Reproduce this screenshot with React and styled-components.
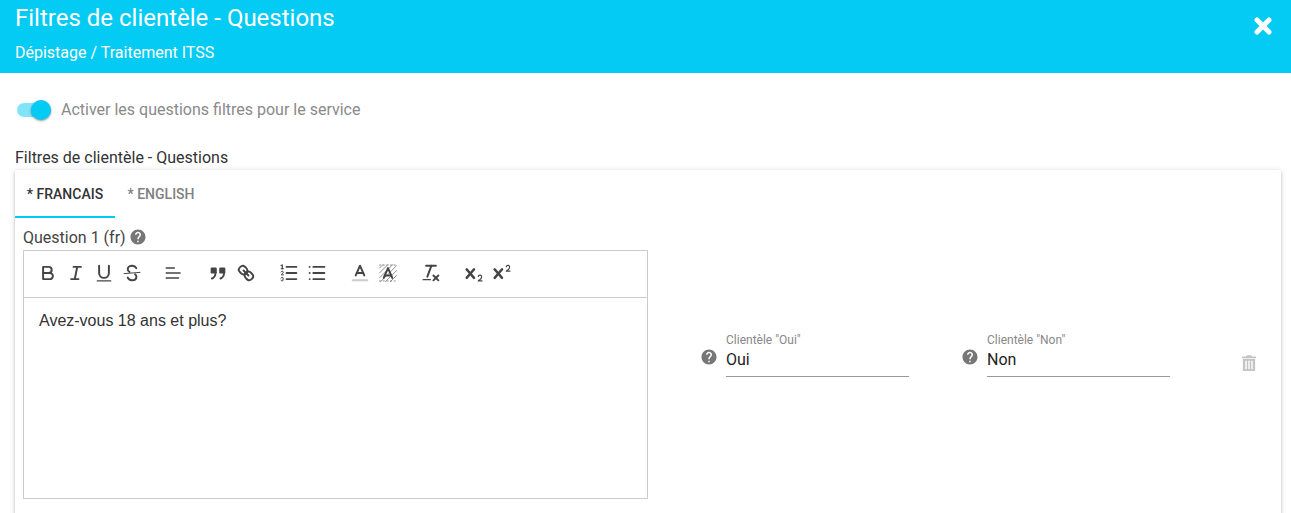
import React from 'react';
import styled, { createGlobalStyle } from 'styled-components';
import { MdHelp } from 'react-icons/md';

const CYAN = '#04cbf4';

const GlobalStyle = createGlobalStyle`
    html, body {
        margin: 0;
        height: 513px;
        overflow: hidden;
        background: #fff;
        font-family: Roboto, "Liberation Sans", sans-serif;
    }
`;

const Header = styled.header`
    height: 73px;
    box-sizing: border-box;
    padding: 3px 19px 0 15px;
    background: ${CYAN};
    color: #fff;
    display: flex;
    justify-content: space-between;
`;

const Title = styled.h1`
    margin: 0;
    font-size: 24px;
    font-weight: 400;
    line-height: 30px;
`;

const Subtitle = styled.div`
    margin-top: 10px;
    font-size: 16px;
    line-height: 19px;
`;

const CloseIcon = styled.svg`
    width: 18px;
    height: 18px;
    margin-top: 14px;
`;

const Main = styled.main`
    padding: 0 10px 0 15px;
`;

const ToggleRow = styled.div`
    display: flex;
    align-items: center;
    height: 74px;
    padding-left: 2px;
    gap: 10px;
`;

const Track = styled.span`
    position: relative;
    display: block;
    width: 34px;
    height: 14px;
    border-radius: 7px;
    background: #81e5fa;
`;

const Thumb = styled.span`
    position: absolute;
    top: -3px;
    right: 0;
    width: 20px;
    height: 20px;
    border-radius: 50%;
    background: ${CYAN};
    box-shadow: 0 1px 3px rgba(0, 0, 0, 0.3), 0 1px 1px rgba(0, 0, 0, 0.14);
`;

const ToggleLabel = styled.span`
    font-size: 16px;
    color: #8a8a8a;
    margin-top: -2px;
`;

const SectionLabel = styled.div`
    font-size: 16px;
    line-height: 19px;
    margin-top: 1px;
    color: #333;
`;

const Card = styled.section`
    margin-top: 3px;
    height: 400px;
    background: #fff;
    box-shadow: 0 1px 5px rgba(0, 0, 0, 0.2), 0 2px 2px rgba(0, 0, 0, 0.12);
`;

const Tabs = styled.div`
    display: flex;
    height: 48px;
`;

const Tab = styled.div`
    box-sizing: border-box;
    width: ${(p) => p.$width}px;
    padding-top: 16px;
    text-align: center;
    font-size: 14px;
    line-height: 16px;
    font-weight: 500;
    color: ${(p) => (p.$active ? '#333' : '#808080')};
    border-bottom: 2px solid ${(p) => (p.$active ? CYAN : 'transparent')};
`;

const Body = styled.div`
    display: flex;
    padding: 10px 0 0 8px;
`;

const EditorColumn = styled.div`
    width: 625px;
`;

const QuestionLabel = styled.div`
    display: flex;
    align-items: center;
    gap: 3px;
    height: 18px;
    margin-bottom: 4px;
    font-size: 16px;
    color: #444;
`;

const HelpIcon = styled(MdHelp)`
    width: 18px;
    height: 18px;
    color: #777;
    flex: none;
`;

const Editor = styled.div`
    border: 1px solid #ccc;
    box-sizing: border-box;
    height: 249px;
`;

const Toolbar = styled.div`
    display: flex;
    box-sizing: border-box;
    height: 47px;
    padding: 10px 10px;
    border-bottom: 1px solid #ccc;
`;

const Group = styled.div`
    display: flex;
    margin-right: 15px;
`;

const ToolButton = styled.span`
    width: 28px;
    height: 24px;
    padding: 1px 3px;
    box-sizing: border-box;
    flex: none;
`;

const Ico = styled.svg`
    display: block;
    width: 22px;
    height: 22px;
    fill: none;
    stroke: #444;
    stroke-width: 1.6;
    stroke-linecap: round;
    stroke-linejoin: round;

    .fill {
        fill: #444;
        stroke: none;
    }
    .thin {
        stroke-width: 0.8;
    }
    .medium {
        stroke-width: 1.1;
    }
    .label {
        stroke: #ccc;
    }
`;

const EditorText = styled.div`
    padding: 13px 15px;
    font-family: "Liberation Sans", Arial, sans-serif;
    font-size: 16px;
    line-height: 20px;
    color: #333;
`;

const Fields = styled.div`
    display: flex;
    align-items: flex-start;
    margin-left: 52px;
    padding-top: 106px;
`;

const FieldGroup = styled.div`
    display: flex;
    align-items: flex-start;
    width: 261px;
`;

const FieldHelp = styled(HelpIcon)`
    margin-top: 14px;
    margin-right: 8px;
`;

const Field = styled.div`
    width: 183px;
    height: 43px;
    box-sizing: border-box;
    border-bottom: 1px solid #999;
`;

const FieldLabel = styled.div`
    font-size: 12px;
    line-height: 13px;
    color: #888;
`;

const FieldValue = styled.div`
    margin-top: 3px;
    font-size: 16px;
    line-height: 19px;
    color: #222;
`;

const TrashIcon = styled.svg`
    width: 14px;
    height: 16px;
    margin: 21px 0 0 20px;
    fill: #c4c4c4;
`;

const icon = (children) => <Ico viewBox="0 0 18 18">{children}</Ico>;

const ICONS = {
    bold: (
        <>
            <path d="M5,4H9.5A2.5,2.5,0,0,1,12,6.5v0A2.5,2.5,0,0,1,9.5,9H5V4Z" />
            <path d="M5,9h5.5A2.5,2.5,0,0,1,13,11.5v0A2.5,2.5,0,0,1,10.5,14H5V9Z" />
        </>
    ),
    italic: (
        <>
            <line x1="7" x2="13" y1="4" y2="4" />
            <line x1="5" x2="11" y1="14" y2="14" />
            <line x1="8" x2="10" y1="14" y2="4" />
        </>
    ),
    underline: (
        <>
            <path d="M5,3V9a4,4,0,0,0,4,4H9a4,4,0,0,0,4-4V3" />
            <rect className="fill" x="3" y="15" width="12" height="1" rx=".5" />
        </>
    ),
    strike: (
        <>
            <line className="thin" x1="15.5" x2="2.5" y1="8.5" y2="9.5" />
            <path d="M12.5,5C11.8,3.7 10.5,3 9,3 C7,3 5.5,4.2 5.5,5.8 C5.5,6.9 6,7.6 7,8.2" />
            <path d="M5.5,12.8C6.2,14.2 7.5,15 9,15 C11,15 12.6,13.9 12.6,12.1 C12.6,11.2 12.2,10.5 11.5,10" />
        </>
    ),
    align: (
        <>
            <line className="medium" x1="1.8" x2="13.2" y1="9" y2="9" />
            <line className="medium" x1="1.8" x2="12" y1="13.1" y2="13.1" />
            <line className="medium" x1="1.8" x2="8.5" y1="4.9" y2="4.9" />
        </>
    ),
    quote: (
        <>
            <rect className="fill" x="3" y="4.5" width="5" height="5" rx="1" />
            <rect className="fill" x="10" y="4.5" width="5" height="5" rx="1" />
            <path d="M7,8.5c0,4.031-3,5-3,5" />
            <path d="M14,8.5c0,4.031-3,5-3,5" />
        </>
    ),
    link: (
        <>
            <line x1="7" x2="11" y1="7" y2="11" />
            <path d="M8.9,4.577a3.476,3.476,0,0,1,.36,4.679A3.476,3.476,0,0,1,4.577,8.9C3.185,7.5,2.035,6.4,4.217,4.217S7.5,3.185,8.9,4.577Z" />
            <path d="M13.423,9.1a3.476,3.476,0,0,0-4.679-.36,3.476,3.476,0,0,0,.36,4.679c1.392,1.392,2.5,2.542,4.679.36S14.815,10.5,13.423,9.1Z" />
        </>
    ),
    ordered: (
        <>
            <line x1="7" x2="15" y1="4" y2="4" />
            <line x1="7" x2="15" y1="9" y2="9" />
            <line x1="7" x2="15" y1="14" y2="14" />
            <line className="thin" x1="2.5" x2="4.5" y1="5.5" y2="5.5" />
            <path className="fill" d="M3.5,6A0.5,0.5,0,0,1,3,5.5V3.085l-0.276.138A0.5,0.5,0,0,1,2.053,3c-0.124-.247-0.023-0.324.224-0.447l1-.5A0.5,0.5,0,0,1,4,2.5v3A0.5,0.5,0,0,1,3.5,6Z" />
            <path className="thin" d="M4.5,10.5h-2c0-.234,1.85-1.076,1.85-2.234A0.959,0.959,0,0,0,2.5,8.156" />
            <path className="thin" d="M2.5,14.846a0.959,0.959,0,0,0,1.85-.109A0.7,0.7,0,0,0,3.75,14a0.688,0.688,0,0,0,.6-0.736,0.959,0.959,0,0,0-1.85-.109" />
        </>
    ),
    bullet: (
        <>
            <line x1="6" x2="15" y1="4" y2="4" />
            <line x1="6" x2="15" y1="9" y2="9" />
            <line x1="6" x2="15" y1="14" y2="14" />
            <line x1="3" x2="3" y1="4" y2="4" />
            <line x1="3" x2="3" y1="9" y2="9" />
            <line x1="3" x2="3" y1="14" y2="14" />
        </>
    ),
    color: (
        <>
            <line className="label" x1="3" x2="15" y1="15" y2="15" />
            <polyline points="5.5 11 9 3 12.5 11" />
            <line x1="11.63" x2="6.38" y1="9" y2="9" />
        </>
    ),
    background: (
        <>
            <g className="thin" opacity="0.6">
                <line x1="2" x2="5" y1="5" y2="2" />
                <line x1="2" x2="9" y1="9" y2="2" />
                <line x1="2" x2="13" y1="13" y2="2" />
                <line x1="3" x2="16" y1="16" y2="3" />
                <line x1="7" x2="16" y1="16" y2="7" />
                <line x1="11" x2="16" y1="16" y2="11" />
                <line x1="2" x2="16" y1="2.5" y2="2.5" strokeDasharray="1 2" />
                <line x1="2" x2="16" y1="15.5" y2="15.5" strokeDasharray="1 2" />
            </g>
            <polyline points="5.5 13 9 5 12.5 13" />
            <line x1="11.63" x2="6.38" y1="11" y2="11" />
        </>
    ),
    clean: (
        <>
            <line x1="5" x2="13" y1="3" y2="3" />
            <line x1="6" x2="9.35" y1="12" y2="3" />
            <line x1="11" x2="15" y1="11" y2="15" />
            <line x1="15" x2="11" y1="11" y2="15" />
            <rect className="fill" x="2" y="14" width="7" height="1" rx=".5" />
        </>
    ),
    sub: (
        <>
            <path className="fill" d="M15.5,15H13.861a3.858,3.858,0,0,0,1.914-2.975,1.8,1.8,0,0,0-1.6-1.751A1.921,1.921,0,0,0,12.021,11.7a0.50013,0.50013,0,1,0,.957.291h0a0.914,0.914,0,0,1,1.053-.725,0.81,0.81,0,0,1,.744.762c0,1.076-1.16971,1.86982-1.93971,2.43082A1.45639,1.45639,0,0,0,12,15.5a0.5,0.5,0,0,0,.5.5h3A0.5,0.5,0,0,0,15.5,15Z" />
            <path className="fill" d="M9.65,5.241a1,1,0,0,0-1.409.108L6,7.964,3.759,5.349A1,1,0,0,0,2.241,6.649L4.684,9.5,2.241,12.35A1,1,0,0,0,3.759,13.65L6,11.036,8.241,13.65a1,1,0,1,0,1.518-1.3L7.316,9.5,9.759,6.651A1,1,0,0,0,9.65,5.241Z" />
        </>
    ),
    sup: (
        <>
            <path className="fill" d="M15.5,7H13.861a4.015,4.015,0,0,0,1.914-2.975,1.8,1.8,0,0,0-1.6-1.751A1.922,1.922,0,0,0,12.021,3.7a0.5,0.5,0,1,0,.957.291,0.917,0.917,0,0,1,1.053-.725,0.81,0.81,0,0,1,.744.762c0,1.077-1.164,1.925-1.934,2.486A1.423,1.423,0,0,0,12,7.5a0.5,0.5,0,0,0,.5.5h3A0.5,0.5,0,0,0,15.5,7Z" />
            <path className="fill" d="M9.651,5.241a1,1,0,0,0-1.41.108L6,7.964,3.759,5.349a1,1,0,1,0-1.519,1.3L4.683,9.5,2.241,12.35a1,1,0,1,0,1.519,1.3L6,11.036l2.241,2.616a1,1,0,0,0,1.519-1.3L7.317,9.5,9.759,6.651A1,1,0,0,0,9.651,5.241Z" />
        </>
    ),
};

const TOOLBAR = [
    ['bold', 'italic', 'underline', 'strike'],
    ['align'],
    ['quote', 'link'],
    ['ordered', 'bullet'],
    ['color', 'background'],
    ['clean'],
    ['sub', 'sup'],
];

const ClientField = ({ label, value }) => (
    <FieldGroup>
        <FieldHelp />
        <Field>
            <FieldLabel>{label}</FieldLabel>
            <FieldValue>{value}</FieldValue>
        </Field>
    </FieldGroup>
);

const App = () => (
    <>
        <GlobalStyle />
        <Header>
            <div>
                <Title>Filtres de clientèle - Questions</Title>
                <Subtitle>Dépistage / Traitement ITSS</Subtitle>
            </div>
            <CloseIcon viewBox="0 0 18 18">
                <path d="M3,3L15,15M15,3L3,15" stroke="#fff" strokeWidth="5" strokeLinecap="round" />
            </CloseIcon>
        </Header>
        <Main>
            <ToggleRow>
                <Track>
                    <Thumb />
                </Track>
                <ToggleLabel>Activer les questions filtres pour le service</ToggleLabel>
            </ToggleRow>
            <SectionLabel>Filtres de clientèle - Questions</SectionLabel>
            <Card>
                <Tabs>
                    <Tab $active $width={100}>* FRANCAIS</Tab>
                    <Tab $width={92}>* ENGLISH</Tab>
                </Tabs>
                <Body>
                    <EditorColumn>
                        <QuestionLabel>
                            Question 1 (fr)
                            <HelpIcon />
                        </QuestionLabel>
                        <Editor>
                            <Toolbar>
                                {TOOLBAR.map((group, i) => (
                                    <Group key={i}>
                                        {group.map((name) => (
                                            <ToolButton key={name}>{icon(ICONS[name])}</ToolButton>
                                        ))}
                                    </Group>
                                ))}
                            </Toolbar>
                            <EditorText>Avez-vous 18 ans et plus?</EditorText>
                        </Editor>
                    </EditorColumn>
                    <Fields>
                        <ClientField label={'Clientèle "Oui"'} value="Oui" />
                        <ClientField label={'Clientèle "Non"'} value="Non" />
                        <TrashIcon viewBox="0 0 16 18">
                            <path d="M5.5 0h5l.7 1.5H16v2H0v-2h4.8zM1 4.5h14V18H1zM3.8 6.5v9.5h1.6V6.5zM7.2 6.5v9.5h1.6V6.5zM10.6 6.5v9.5h1.6V6.5z" fillRule="evenodd" />
                        </TrashIcon>
                    </Fields>
                </Body>
            </Card>
        </Main>
    </>
);

export default App;
